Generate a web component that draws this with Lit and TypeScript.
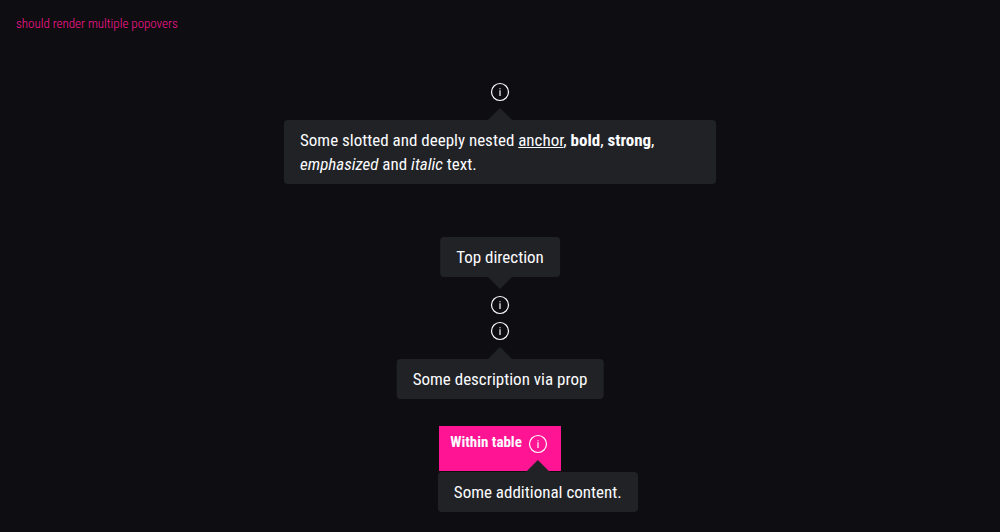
import { LitElement, html, css } from "lit";
import { customElement, property } from "lit/decorators.js";

@customElement("info-popover")
class InfoPopover extends LitElement {
  @property({ reflect: true }) direction = "bottom";
  @property() description = "";

  static styles = css`
    :host {
      position: relative;
      display: inline-flex;
      width: 24px;
      height: 24px;
      font-size: 17px;
      font-weight: 400;
      line-height: 24px;
      text-align: left;
      color: #fbfcff;
    }
    .trigger {
      display: flex;
      width: 24px;
      height: 24px;
      padding: 0;
      border: 0;
      border-radius: 50%;
      background: none;
      color: inherit;
      cursor: pointer;
    }
    .bubble {
      position: absolute;
      z-index: 1;
      top: 40px;
      left: 50%;
      transform: translateX(-50%);
      box-sizing: border-box;
      width: max-content;
      max-width: 432px;
      padding: 8px 16px;
      border-radius: 4px;
      background: #212225;
    }
    .arrow {
      position: absolute;
      z-index: 1;
      top: 28px;
      left: 0;
      width: 24px;
      height: 12px;
      background: #212225;
      clip-path: polygon(50% 0, 100% 100%, 0 100%);
    }
    :host([direction="top"]) .bubble {
      top: auto;
      bottom: 40px;
    }
    :host([direction="top"]) .arrow {
      top: auto;
      bottom: 28px;
      clip-path: polygon(0 0, 100% 0, 50% 100%);
    }
    :host([direction="bottom-start"]) .bubble {
      left: -88px;
      transform: none;
    }
  `;

  render() {
    return html`
      <button class="trigger" type="button" aria-label="More information" aria-expanded="true">
        <svg width="24" height="24" viewBox="0 0 24 24" aria-hidden="true">
          <circle cx="12" cy="12" r="8.5" fill="none" stroke="currentColor" stroke-width="1.2" />
          <path d="M11.4 8.2h1.2v1.1h-1.2zM11.4 10.3h1.2V16h-1.2z" fill="currentColor" />
        </svg>
      </button>
      <span class="arrow"></span>
      <div class="bubble" role="status">${this.description}<slot></slot></div>
    `;
  }
}

@customElement("app-root")
class AppRoot extends LitElement {
  static styles = css`
    :host {
      display: block;
      box-sizing: border-box;
      min-height: 100vh;
      padding: 16px;
      background: #0e0e12;
      color: #fbfcff;
      font-family: "Roboto Condensed", Roboto, sans-serif;
    }
    .title {
      margin: 0;
      font-size: 13px;
      font-weight: 300;
      line-height: 16px;
      color: #ff1493;
    }
    .stage {
      display: flex;
      flex-direction: column;
      align-items: center;
      padding-top: 48px;
    }
    .pair {
      display: flex;
      flex-direction: column;
      gap: 2px;
      margin-top: 189px;
    }
    a {
      color: inherit;
      text-underline-offset: 1px;
    }
    table {
      margin-top: 83px;
      border-collapse: collapse;
      background: #ff1493;
    }
    th {
      height: 45px;
      box-sizing: border-box;
      padding: 6px 11px 0;
      font-size: 15px;
      line-height: 20px;
      vertical-align: top;
    }
    .cell {
      display: flex;
      gap: 4px;
    }
  `;

  render() {
    return html`
      <h1 class="title">should render multiple popovers</h1>
      <main class="stage">
        <info-popover>
          Some slotted and deeply nested <a href="#">anchor</a>, <b>bold</b>,
          <strong>strong</strong>, <em>emphasized</em> and <i>italic</i> text.
        </info-popover>
        <div class="pair">
          <info-popover direction="top">Top direction</info-popover>
          <info-popover description="Some description via prop"></info-popover>
        </div>
        <table>
          <tr>
            <th scope="col">
              <div class="cell">
                Within table
                <info-popover direction="bottom-start">Some additional content.</info-popover>
              </div>
            </th>
          </tr>
        </table>
      </main>
    `;
  }
}
